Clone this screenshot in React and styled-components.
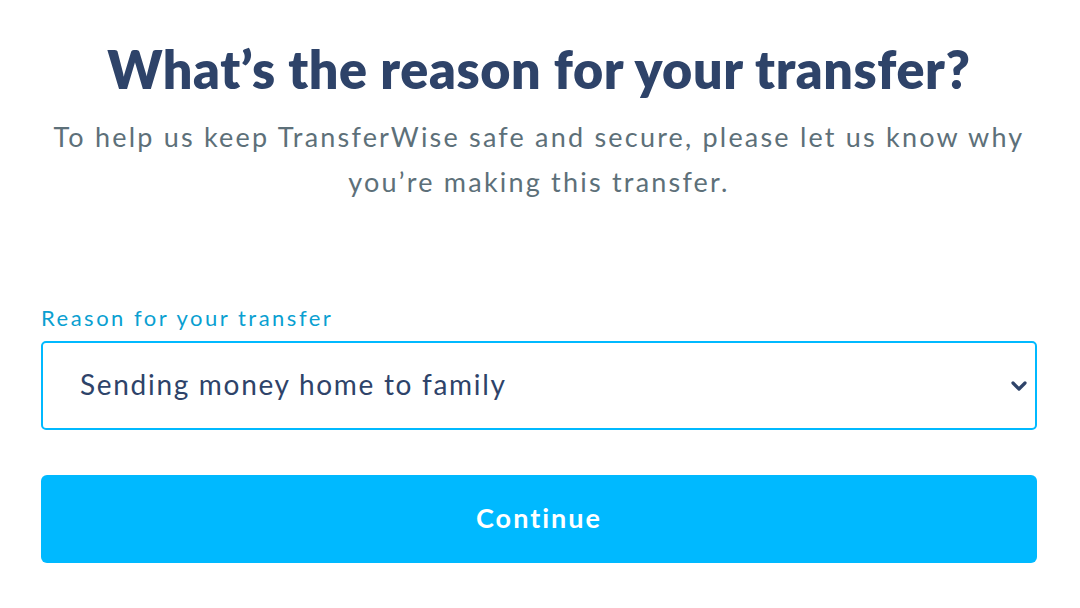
import React from "react";
import styled, { createGlobalStyle } from "styled-components";

const Global = createGlobalStyle`
  html, body { margin: 0; padding: 0; background: #fff; }
  body { font-family: Lato, "Open Sans", sans-serif; -webkit-font-smoothing: antialiased; }
  * { box-sizing: border-box; }
`;

const Page = styled.div`
  width: 1080px;
  height: 608px;
  padding: 36px 43px 0 41px;
  display: flex;
  flex-direction: column;
`;

const Title = styled.h1`
  margin: 0;
  text-align: center;
  font-size: 52px;
  font-weight: 800;
  line-height: 66px;
  color: #2e4369;
  letter-spacing: 0.6px;
`;

const Lead = styled.p`
  margin: 12px 0 0;
  text-align: center;
  font-size: 27px;
  line-height: 45px;
  color: #5d7079;
  letter-spacing: 2.2px;
  white-space: nowrap;
`;

const Field = styled.div`
  margin-top: 99px;
  display: flex;
  flex-direction: column;
`;

const Label = styled.label`
  font-size: 22px;
  line-height: 30px;
  color: #0a9fd1;
  letter-spacing: 2.5px;
  margin-bottom: 8px;
`;

const SelectBox = styled.div`
  position: relative;
  height: 89px;
  border: 2px solid #00b9ff;
  border-radius: 5px;
  display: flex;
  align-items: center;
  padding: 0 37px 4px;
`;

const SelectText = styled.span`
  font-size: 28px;
  color: #2e4369;
  letter-spacing: 1.7px;
`;

const Chevron = styled.svg`
  position: absolute;
  right: 7px;
  top: 50%;
  transform: translateY(-50%);
`;

const Button = styled.button`
  margin-top: 45px;
  height: 88px;
  width: 100%;
  border: none;
  border-radius: 6px;
  background: #00b9ff;
  color: #fff;
  font-family: inherit;
  font-size: 27px;
  font-weight: 700;
  letter-spacing: 2px;
  padding: 0 0 4px;
  cursor: pointer;
`;

export default function App() {
  return (
    <>
      <Global />
      <Page>
        <Title>What’s the reason for your transfer?</Title>
        <Lead>
          To help us keep TransferWise safe and secure, please let us know why
          <br />
          you’re making this transfer.
        </Lead>
        <Field>
          <Label>Reason for your transfer</Label>
          <SelectBox>
            <SelectText>Sending money home to family</SelectText>
            <Chevron width="18" height="14" viewBox="0 0 18 14">
              <path d="M3 4 L9 10 L15 4" fill="none" stroke="#2e4369" strokeWidth="3.2" strokeLinecap="round" strokeLinejoin="round" />
            </Chevron>
          </SelectBox>
        </Field>
        <Button>Continue</Button>
      </Page>
    </>
  );
}
